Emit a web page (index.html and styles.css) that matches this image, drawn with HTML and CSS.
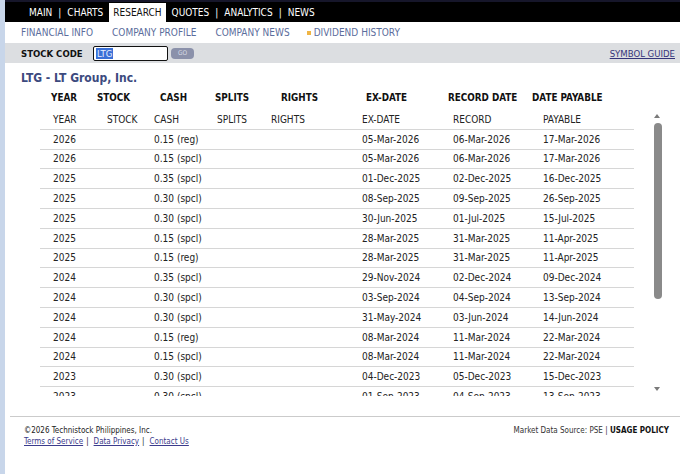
FILE: index.html
```html
<!DOCTYPE html>
<html>
<head>
<meta charset="utf-8">
<title>Dividend History - LTG</title>
<link rel="stylesheet" href="styles.css">
</head>
<body>
<div class="page">
  <div class="strip"></div>
  <div class="main">
    <nav class="topnav">
      <span class="nav-item">MAIN</span><span class="sep">|</span>
      <span class="nav-item">CHARTS</span>
      <span class="nav-item active">RESEARCH</span>
      <span class="nav-item">QUOTES</span><span class="sep">|</span>
      <span class="nav-item">ANALYTICS</span><span class="sep">|</span>
      <span class="nav-item">NEWS</span>
    </nav>
    <div class="subnav">
      <span class="sub-item">FINANCIAL INFO</span>
      <span class="sub-item">COMPANY PROFILE</span>
      <span class="sub-item">COMPANY NEWS</span>
      <span class="sub-item current"><span class="bullet"></span>DIVIDEND HISTORY</span>
    </div>
    <div class="toolbar">
      <div class="code-form">
        <span class="code-label">STOCK CODE</span>
        <span class="code-input"><span class="selected">LTG</span></span>
        <span class="go-btn">GO</span>
      </div>
      <a class="symbol-guide">SYMBOL GUIDE</a>
    </div>
    <h1 class="title">LTG - LT Group, Inc.</h1>
    <div class="col-head">
      <span>YEAR</span><span>STOCK</span><span>CASH</span><span>SPLITS</span><span>RIGHTS</span><span>EX-DATE</span><span>RECORD DATE</span><span>DATE PAYABLE</span>
    </div>
    <div class="scroll-box">
      <div class="viewport">
        <table class="div-table">
          <colgroup>
            <col class="c1"><col class="c2"><col class="c3"><col class="c4"><col class="c5"><col class="c6"><col class="c7"><col class="c8">
          </colgroup>
          <thead>
            <tr><th>YEAR</th><th>STOCK</th><th>CASH</th><th>SPLITS</th><th>RIGHTS</th><th>EX-DATE</th><th>RECORD</th><th>PAYABLE</th></tr>
          </thead>
          <tbody>
            <tr><td>2026</td><td></td><td>0.15 (reg)</td><td></td><td></td><td>05-Mar-2026</td><td>06-Mar-2026</td><td>17-Mar-2026</td></tr>
            <tr><td>2026</td><td></td><td>0.15 (spcl)</td><td></td><td></td><td>05-Mar-2026</td><td>06-Mar-2026</td><td>17-Mar-2026</td></tr>
            <tr><td>2025</td><td></td><td>0.35 (spcl)</td><td></td><td></td><td>01-Dec-2025</td><td>02-Dec-2025</td><td>16-Dec-2025</td></tr>
            <tr><td>2025</td><td></td><td>0.30 (spcl)</td><td></td><td></td><td>08-Sep-2025</td><td>09-Sep-2025</td><td>26-Sep-2025</td></tr>
            <tr><td>2025</td><td></td><td>0.30 (spcl)</td><td></td><td></td><td>30-Jun-2025</td><td>01-Jul-2025</td><td>15-Jul-2025</td></tr>
            <tr><td>2025</td><td></td><td>0.15 (spcl)</td><td></td><td></td><td>28-Mar-2025</td><td>31-Mar-2025</td><td>11-Apr-2025</td></tr>
            <tr><td>2025</td><td></td><td>0.15 (reg)</td><td></td><td></td><td>28-Mar-2025</td><td>31-Mar-2025</td><td>11-Apr-2025</td></tr>
            <tr><td>2024</td><td></td><td>0.35 (spcl)</td><td></td><td></td><td>29-Nov-2024</td><td>02-Dec-2024</td><td>09-Dec-2024</td></tr>
            <tr><td>2024</td><td></td><td>0.30 (spcl)</td><td></td><td></td><td>03-Sep-2024</td><td>04-Sep-2024</td><td>13-Sep-2024</td></tr>
            <tr><td>2024</td><td></td><td>0.30 (spcl)</td><td></td><td></td><td>31-May-2024</td><td>03-Jun-2024</td><td>14-Jun-2024</td></tr>
            <tr><td>2024</td><td></td><td>0.15 (reg)</td><td></td><td></td><td>08-Mar-2024</td><td>11-Mar-2024</td><td>22-Mar-2024</td></tr>
            <tr><td>2024</td><td></td><td>0.15 (spcl)</td><td></td><td></td><td>08-Mar-2024</td><td>11-Mar-2024</td><td>22-Mar-2024</td></tr>
            <tr><td>2023</td><td></td><td>0.30 (spcl)</td><td></td><td></td><td>04-Dec-2023</td><td>05-Dec-2023</td><td>15-Dec-2023</td></tr>
            <tr><td>2023</td><td></td><td>0.30 (spcl)</td><td></td><td></td><td>01-Sep-2023</td><td>04-Sep-2023</td><td>13-Sep-2023</td></tr>
            <tr><td>2023</td><td></td><td>0.30 (spcl)</td><td></td><td></td><td>02-Jun-2023</td><td>05-Jun-2023</td><td>16-Jun-2023</td></tr>
            <tr><td>2023</td><td></td><td>0.15 (reg)</td><td></td><td></td><td>10-Mar-2023</td><td>13-Mar-2023</td><td>24-Mar-2023</td></tr>
            <tr><td>2022</td><td></td><td>0.30 (spcl)</td><td></td><td></td><td>29-Nov-2022</td><td>02-Dec-2022</td><td>15-Dec-2022</td></tr>
            <tr><td>2022</td><td></td><td>0.15 (reg)</td><td></td><td></td><td>07-Mar-2022</td><td>10-Mar-2022</td><td>24-Mar-2022</td></tr>
            <tr><td>2021</td><td></td><td>0.30 (spcl)</td><td></td><td></td><td>26-Nov-2021</td><td>01-Dec-2021</td><td>14-Dec-2021</td></tr>
          </tbody>
        </table>
      </div>
      <div class="vscroll">
        <div class="sb-btn sb-top"><span class="tri-up"></span></div>
        <div class="sb-track"><div class="sb-thumb"></div></div>
        <div class="sb-btn"><span class="tri-down"></span></div>
      </div>
    </div>
    <footer class="footer">
      <div class="foot-left">
        <div class="copy">©2026 Technistock Philippines, Inc.</div>
        <div class="links"><a>Terms of Service</a><span class="lsep">|</span><a>Data Privacy</a><span class="lsep">|</span><a>Contact Us</a></div>
      </div>
      <div class="foot-right">Market Data Source: PSE | <b>USAGE POLICY</b></div>
    </footer>
  </div>
</div>
</body>
</html>
```
FILE: styles.css
```css
html, body {
  margin: 0;
  padding: 0;
  background: #ffffff;
}
body {
  font-family: "DejaVu Sans Condensed", "DejaVu Sans", Verdana, sans-serif;
  color: #222;
  font-size: 10px;
}
.page {
  display: flex;
  min-height: 474px;
}
.strip {
  width: 5px;
  background: #c8d6ea;
  flex: none;
}
.main {
  flex: 1;
  min-width: 0;
}

/* top navigation */
.topnav {
  height: 22px;
  box-sizing: border-box;
  background: #000;
  border-top: 2px solid #16162a;
  display: flex;
  align-items: flex-end;
  padding-left: 20px;
  color: #fff;
  font-size: 10px;
}
.nav-item {
  height: 19px;
  line-height: 19px;
  padding: 0 4px;
}
.nav-item.active {
  background: #fff;
  color: #111;
  margin: 0 2px;
}
.sep {
  height: 19px;
  line-height: 19px;
  padding: 0 2px;
}

/* sub navigation */
.subnav {
  height: 21px;
  display: flex;
  align-items: center;
  padding-left: 16px;
  gap: 19px;
  color: #5b6d9c;
  font-size: 10px;
}
.sub-item {
  display: flex;
  align-items: center;
}
.bullet {
  width: 4px;
  height: 4px;
  background: #f0b545;
  margin-right: 3px;
  margin-left: -2px;
}

/* toolbar */
.toolbar {
  height: 20px;
  background: #dcdee1;
  display: flex;
  align-items: center;
  justify-content: space-between;
  padding: 0 5px 0 16px;
}
.code-form {
  display: flex;
  align-items: center;
}
.code-label {
  font-weight: bold;
  color: #111;
  font-size: 9.5px;
  width: 72px;
}
.code-input {
  width: 71px;
  height: 13px;
  border: 1px solid #111;
  border-radius: 2px;
  background: #fff;
  display: flex;
  align-items: center;
  padding-left: 2px;
  box-sizing: content-box;
}
.selected {
  background: #3a6fd6;
  color: #e8eeff;
  font-size: 9.5px;
  line-height: 11px;
  padding: 0 1px;
}
.go-btn {
  margin-left: 3px;
  width: 23px;
  height: 11px;
  border-radius: 4px;
  background: #8b91aa;
  color: #d6d9e4;
  font-size: 6.5px;
  display: flex;
  align-items: center;
  justify-content: center;
}
.symbol-guide {
  color: #34347a;
  text-decoration: underline;
  font-size: 9.5px;
}

/* title */
.title {
  margin: 0;
  padding: 8px 0 0 16px;
  height: 14px;
  line-height: 14px;
  font-size: 12px;
  font-weight: bold;
  color: #3c4a7e;
}
.col-head {
  display: grid;
  grid-template-columns: 46px 63px 55px 66px 85px 82px 84px auto;
  padding-left: 46px;
  margin-top: 6px;
  height: 14px;
  line-height: 14px;
  font-weight: bold;
  color: #111;
  font-size: 9.8px;
}

/* scroll area */
.scroll-box {
  display: flex;
  margin-top: 2px;
  height: 289px;
  padding-left: 35px;
}
.viewport {
  width: 610px;
  overflow: hidden;
  padding-top: 3px;
}
.div-table {
  width: 594px;
  border-collapse: collapse;
  table-layout: fixed;
  font-size: 10px;
}
.c1 { width: 54px; }
.c2 { width: 47px; }
.c3 { width: 63px; }
.c4 { width: 54px; }
.c5 { width: 91px; }
.c6 { width: 91px; }
.c7 { width: 90px; }
.c8 { width: 104px; }
.div-table th,
.div-table td {
  height: 18.8px;
  padding: 0 0 0 13px;
  text-align: left;
  font-weight: normal;
  border-bottom: 1px solid #d6d6d6;
  white-space: nowrap;
  color: #222;
}

/* fake scrollbar */
.vscroll {
  width: 14px;
  display: flex;
  flex-direction: column;
}
.sb-btn {
  height: 14px;
  display: flex;
  align-items: center;
  justify-content: center;
}
.sb-btn.sb-top {
  height: 16px;
  padding-top: 1px;
  box-sizing: border-box;
}
.tri-up {
  width: 0;
  height: 0;
  border-left: 3.5px solid transparent;
  border-right: 3.5px solid transparent;
  border-bottom: 4px solid #7a7a7a;
}
.tri-down {
  width: 0;
  height: 0;
  border-left: 3.5px solid transparent;
  border-right: 3.5px solid transparent;
  border-top: 4px solid #7a7a7a;
}
.sb-track {
  flex: 1;
}
.sb-thumb {
  width: 8px;
  height: 176px;
  margin-left: 4px;
  background: #8a8a8a;
  border-radius: 4px;
}

/* footer */
.footer {
  margin: 20px 0 0 5px;
  border-top: 1px solid #cbcbcb;
  display: flex;
  justify-content: space-between;
  padding: 8px 11px 0 14px;
  font-size: 8px;
  color: #222;
}
.copy {
  line-height: 11px;
}
.links {
  display: flex;
  line-height: 11px;
}
.links a {
  color: #3b3b8c;
  text-decoration: underline;
}
.lsep {
  padding: 0 5px 0 3px;
}
.foot-right {
  line-height: 11px;
  color: #333;
}
.foot-right b {
  color: #111;
}
```
